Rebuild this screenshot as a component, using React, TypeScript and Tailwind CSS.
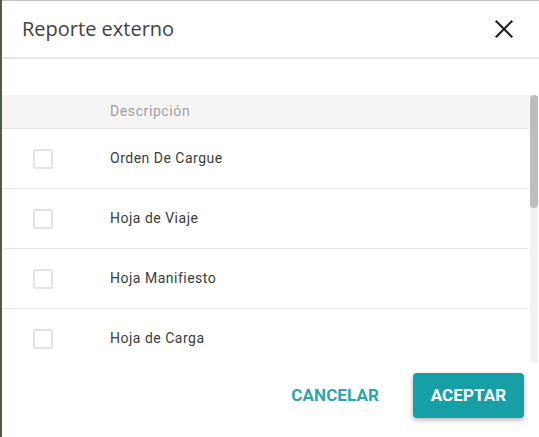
const rows = ['Orden De Cargue', 'Hoja de Viaje', 'Hoja Manifiesto', 'Hoja de Carga'];

export default function App() {
  return (
    <div className="w-[539px] h-[437px] bg-[#4b5d45] overflow-hidden">
      <div className="ml-[2px] h-full bg-white border-t border-t-[#c4c4c4] flex flex-col font-['Roboto',sans-serif]">
        <div className="h-[58px] shrink-0 flex items-center justify-between pl-[20px] pr-[26px] border-b-2 border-b-[#e6e6e6]">
          <h1 className="font-['Open_Sans',sans-serif] text-[20px] text-[#424242]">Reporte externo</h1>
          <svg width="18" height="18" viewBox="0 0 18 18" className="text-[#222]" aria-hidden="true">
            <path d="M1.5 1.5 L16.5 16.5 M16.5 1.5 L1.5 16.5" stroke="currentColor" strokeWidth="2.2" strokeLinecap="square" />
          </svg>
        </div>

        <div className="mt-[36px] h-[268px] shrink-0 flex">
          <div className="flex-1 overflow-hidden">
            <div className="h-[34px] bg-[#f5f5f5] border-b border-b-[#e3e3e3] flex items-center">
              <span className="ml-[108px] text-[14px] text-[#a0a0a0] tracking-[0.6px]">Descripción</span>
            </div>
            {rows.map((label) => (
              <div key={label} className="h-[60px] border-b border-b-[#e6e6e6] flex items-center">
                <span className="ml-[31px] w-[20px] h-[20px] rounded-[3px] border-2 border-[#e4e4e4] bg-white" />
                <span className="ml-[57px] text-[14px] text-[#3c3c3c] tracking-[0.5px]">{label}</span>
              </div>
            ))}
          </div>
          <div className="w-[8px] ml-[1px] mr-[1px] bg-[#f2f2f2] rounded-full flex flex-col">
            <div className="h-[113px] bg-[#bdbdbd] rounded-full" />
          </div>
        </div>

        <div className="flex-1 flex items-start justify-end pt-[10px] pr-[15px] gap-[18px]">
          <button className="h-[45px] px-[16px] text-[17px] font-bold text-[#2ba5b1] tracking-[0.1px]">CANCELAR</button>
          <button className="w-[111px] h-[45px] rounded-[4px] bg-[#169fa7] text-white text-[17px] font-bold tracking-[0.1px] shadow-[0_2px_5px_rgba(0,0,0,0.3)]">
            ACEPTAR
          </button>
        </div>
      </div>
    </div>
  );
}
